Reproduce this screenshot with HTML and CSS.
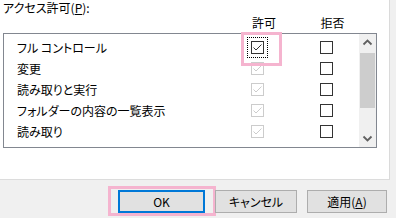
FILE: index.html
```html
<!DOCTYPE html>
<html lang="ja">
<head>
    <meta charset="UTF-8">
    <title>アクセス許可</title>
    <link rel="stylesheet" href="styles.css">
</head>
<body>

<div class="window">
    <div class="content">
        <div class="caption">アクセス許可(<u>P</u>):</div>
        <div class="perm-head">
            <span>許可</span>
            <span>拒否</span>
        </div>
        <div class="perm-list">
            <div class="perm-rows">
                <div class="perm-row">
                    <span class="perm-name">フル コントロール</span>
                    <span class="cell"><span class="focus">
                        <svg class="box" viewBox="0 0 13 13"><rect x="0.5" y="0.5" width="12" height="12" fill="#fff" stroke="#333"/><polyline points="2.5,6.5 5,9 10.5,3.5" fill="none" stroke="#333"/></svg>
                    </span></span>
                    <span class="cell"><svg class="box" viewBox="0 0 13 13"><rect x="0.5" y="0.5" width="12" height="12" fill="#fff" stroke="#333"/></svg></span>
                </div>
                <div class="perm-row">
                    <span class="perm-name">変更</span>
                    <span class="cell"><svg class="box" viewBox="0 0 13 13"><rect x="0.5" y="0.5" width="12" height="12" fill="#fff" stroke="#ccc"/><polyline points="2.5,6.5 5,9 10.5,3.5" fill="none" stroke="#ccc"/></svg></span>
                    <span class="cell"><svg class="box" viewBox="0 0 13 13"><rect x="0.5" y="0.5" width="12" height="12" fill="#fff" stroke="#333"/></svg></span>
                </div>
                <div class="perm-row">
                    <span class="perm-name">読み取りと実行</span>
                    <span class="cell"><svg class="box" viewBox="0 0 13 13"><rect x="0.5" y="0.5" width="12" height="12" fill="#fff" stroke="#ccc"/><polyline points="2.5,6.5 5,9 10.5,3.5" fill="none" stroke="#ccc"/></svg></span>
                    <span class="cell"><svg class="box" viewBox="0 0 13 13"><rect x="0.5" y="0.5" width="12" height="12" fill="#fff" stroke="#333"/></svg></span>
                </div>
                <div class="perm-row">
                    <span class="perm-name">フォルダーの内容の一覧表示</span>
                    <span class="cell"><svg class="box" viewBox="0 0 13 13"><rect x="0.5" y="0.5" width="12" height="12" fill="#fff" stroke="#ccc"/><polyline points="2.5,6.5 5,9 10.5,3.5" fill="none" stroke="#ccc"/></svg></span>
                    <span class="cell"><svg class="box" viewBox="0 0 13 13"><rect x="0.5" y="0.5" width="12" height="12" fill="#fff" stroke="#333"/></svg></span>
                </div>
                <div class="perm-row">
                    <span class="perm-name">読み取り</span>
                    <span class="cell"><svg class="box" viewBox="0 0 13 13"><rect x="0.5" y="0.5" width="12" height="12" fill="#fff" stroke="#ccc"/><polyline points="2.5,6.5 5,9 10.5,3.5" fill="none" stroke="#ccc"/></svg></span>
                    <span class="cell"><svg class="box" viewBox="0 0 13 13"><rect x="0.5" y="0.5" width="12" height="12" fill="#fff" stroke="#333"/></svg></span>
                </div>
            </div>
            <div class="scrollbar">
                <div class="arrow"><svg viewBox="0 0 17 17"><polyline points="4.5,10.5 8.5,6.5 12.5,10.5" fill="none" stroke="#606060" stroke-width="1.8"/></svg></div>
                <div class="track"><div class="thumb"></div></div>
                <div class="arrow"><svg viewBox="0 0 17 17"><polyline points="4.5,6.5 8.5,10.5 12.5,6.5" fill="none" stroke="#606060" stroke-width="1.8"/></svg></div>
            </div>
        </div>
        <div class="mark mark-allow"></div>
    </div>

    <div class="buttons">
        <button class="btn btn-ok">OK<span class="mark mark-ok"></span></button>
        <button class="btn btn-cancel">キャンセル</button>
        <button class="btn btn-apply">適用(<u>A</u>)</button>
    </div>
</div>

</body>
</html>
```

FILE: styles.css
```css
body {
    margin: 0;
    width: 396px;
    height: 218px;
    overflow: hidden;
    background-color: #f0f0f0;
    font-family: "Noto Sans CJK JP", "Liberation Sans", sans-serif;
    font-feature-settings: "palt";
    font-size: 12px;
    color: #000;
}

.window {
    display: flex;
    flex-direction: column;
    height: 218px;
}

.content {
    position: relative;
    width: 386px;
    height: 179px;
    padding-left: 3px;
    background-color: #fff;
    border-right: 1px solid #dadada;
    border-bottom: 1px solid #dcdcdc;
}

.caption {
    height: 16px;
    line-height: 16px;
}

.caption u,
.btn u {
    text-underline-offset: 1px;
}

.perm-head {
    display: flex;
    height: 17px;
    line-height: 13px;
    padding-left: 249px;
}

.perm-head span {
    width: 71px;
}

.perm-list {
    display: flex;
    width: 372px;
    height: 113px;
    border: 1px solid #828790;
}

.perm-rows {
    flex: 1;
    overflow: hidden;
    padding-top: 3px;
}

.perm-row {
    display: grid;
    grid-template-columns: 219px 69px 69px;
    height: 21px;
    align-items: center;
}

.perm-name {
    padding-left: 13px;
    line-height: 21px;
    white-space: nowrap;
}

.cell {
    display: flex;
    justify-content: center;
}

.box {
    display: block;
    width: 13px;
    height: 13px;
}

.focus {
    display: block;
    outline: 1px dotted #000;
    outline-offset: 3px;
}

.scrollbar {
    display: flex;
    flex-direction: column;
    width: 17px;
    background-color: #f0f0f0;
}

.arrow svg {
    display: block;
    width: 17px;
    height: 17px;
}

.track {
    flex: 1;
    padding: 2px 1px 0;
}

.thumb {
    height: 55px;
    background-color: #cdcdcd;
}

.buttons {
    display: flex;
    justify-content: flex-end;
    padding: 10px 9px 0 0;
}

.btn {
    position: relative;
    height: 23px;
    padding: 0;
    background-color: #e1e1e1;
    border: 1px solid #adadad;
    font-family: inherit;
    font-feature-settings: "palt";
    font-size: 12px;
    color: #000;
}

.btn-ok {
    width: 87px;
    border: 2px solid #0078d7;
}

.btn-cancel {
    width: 82px;
    margin-left: 10px;
}

.btn-apply {
    width: 80px;
    margin-left: 10px;
}

.mark {
    position: absolute;
    border: 3px solid #f5b4cf;
    pointer-events: none;
}

.mark-allow {
    left: 241px;
    top: 32px;
    width: 35px;
    height: 28px;
}

.mark-ok {
    left: -12px;
    top: -6px;
    right: -13px;
    bottom: -5px;
}
```
